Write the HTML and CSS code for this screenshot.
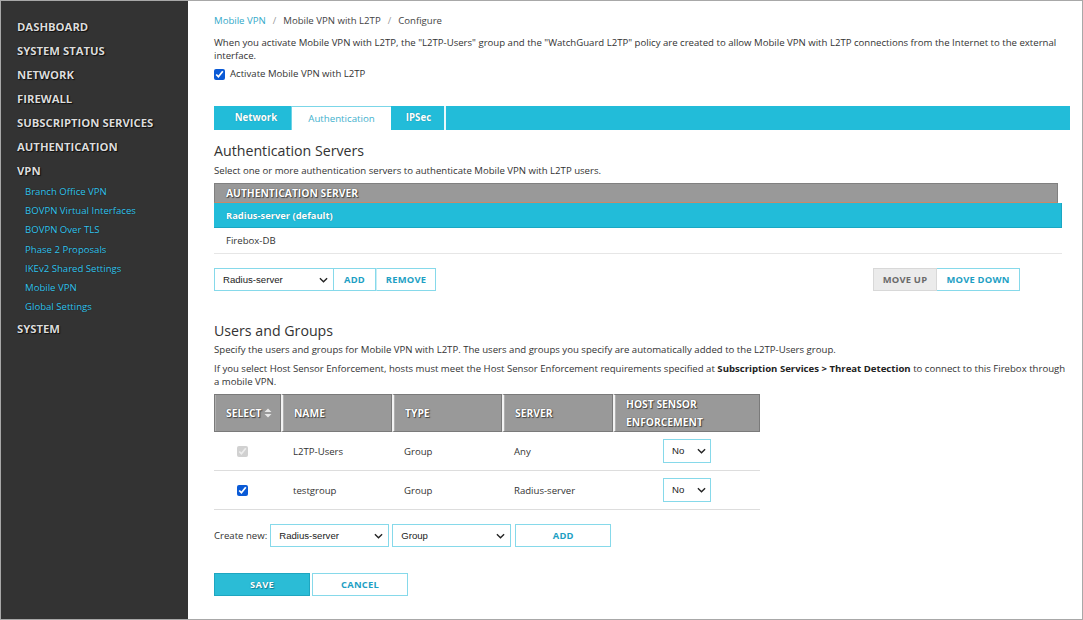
FILE: index.html
```html
<!DOCTYPE html>
<html>
<head>
<meta charset="utf-8">
<link rel="stylesheet" href="styles.css">
</head>
<body>
<div class="frame">
  <nav class="sidebar">
    <div class="nav-main">DASHBOARD</div>
    <div class="nav-main">SYSTEM STATUS</div>
    <div class="nav-main">NETWORK</div>
    <div class="nav-main">FIREWALL</div>
    <div class="nav-main">SUBSCRIPTION SERVICES</div>
    <div class="nav-main">AUTHENTICATION</div>
    <div class="nav-main">VPN</div>
    <div class="nav-sub">
      <div>Branch Office VPN</div>
      <div>BOVPN Virtual Interfaces</div>
      <div>BOVPN Over TLS</div>
      <div>Phase 2 Proposals</div>
      <div>IKEv2 Shared Settings</div>
      <div>Mobile VPN</div>
      <div>Global Settings</div>
    </div>
    <div class="nav-main">SYSTEM</div>
  </nav>
  <main class="main">
    <div class="crumbs"><span class="crumb-link">Mobile VPN</span><span class="sep">/</span>Mobile VPN with L2TP<span class="sep">/</span>Configure</div>
    <p class="intro">When you activate Mobile VPN with L2TP, the "L2TP-Users" group and the "WatchGuard L2TP" policy are created to allow Mobile VPN with L2TP connections from the Internet to the external interface.</p>
    <label class="check-line"><input type="checkbox" checked> Activate Mobile VPN with L2TP</label>

    <div class="tabs">
      <div class="tab tab-net">Network</div>
      <div class="tab tab-active">Authentication</div>
      <div class="tab tab-ipsec">IPSec</div>
      <div class="tab-rest"></div>
    </div>

    <h2 class="h2 h2-auth">Authentication Servers</h2>
    <p class="desc desc-auth">Select one or more authentication servers to authenticate Mobile VPN with L2TP users.</p>
    <div class="auth-table">
      <div class="auth-head">AUTHENTICATION SERVER</div>
      <div class="auth-row auth-sel">Radius-server (default)</div>
      <div class="auth-row">Firebox-DB</div>
    </div>

    <div class="controls">
      <div class="group">
        <div class="sel sel-radius">Radius-server<svg class="chev" viewBox="0 0 10 6" width="9" height="6"><path d="M1 1l4 4 4-4" fill="none" stroke="#222" stroke-width="1.5"/></svg></div>
        <button class="btn btn-add">ADD</button>
        <button class="btn btn-remove">REMOVE</button>
      </div>
      <div class="group">
        <button class="btn btn-gray btn-up">MOVE UP</button>
        <button class="btn btn-down">MOVE DOWN</button>
      </div>
    </div>

    <h2 class="h2 h2-users">Users and Groups</h2>
    <p class="desc desc-users">Specify the users and groups for Mobile VPN with L2TP. The users and groups you specify are automatically added to the L2TP-Users group.</p>
    <p class="desc desc-host">If you select Host Sensor Enforcement, hosts must meet the Host Sensor Enforcement requirements specified at <b>Subscription Services &gt; Threat Detection</b> to connect to this Firebox through a mobile VPN.</p>

    <table class="users">
      <thead>
        <tr>
          <th class="c-sel">SELECT<svg class="sort" viewBox="0 0 8 10" width="8" height="10"><path d="M4 0.5L7.5 4H0.5Z M4 9.5L7.5 6H0.5Z" fill="#e6e6e6"/></svg></th>
          <th class="c-name">NAME</th>
          <th class="c-type">TYPE</th>
          <th class="c-server">SERVER</th>
          <th class="c-host">HOST SENSOR<br>ENFORCEMENT</th>
        </tr>
      </thead>
      <tbody>
        <tr>
          <td class="c-sel"><input type="checkbox" checked disabled></td>
          <td>L2TP-Users</td>
          <td>Group</td>
          <td>Any</td>
          <td class="c-host"><div class="sel sel-no">No<svg class="chev" viewBox="0 0 10 6" width="9" height="6"><path d="M1 1l4 4 4-4" fill="none" stroke="#222" stroke-width="1.5"/></svg></div></td>
        </tr>
        <tr>
          <td class="c-sel"><input type="checkbox" checked></td>
          <td>testgroup</td>
          <td>Group</td>
          <td>Radius-server</td>
          <td class="c-host"><div class="sel sel-no">No<svg class="chev" viewBox="0 0 10 6" width="9" height="6"><path d="M1 1l4 4 4-4" fill="none" stroke="#222" stroke-width="1.5"/></svg></div></td>
        </tr>
      </tbody>
    </table>

    <div class="create">
      <span class="create-label">Create new:</span>
      <div class="sel sel-create">Radius-server<svg class="chev" viewBox="0 0 10 6" width="9" height="6"><path d="M1 1l4 4 4-4" fill="none" stroke="#222" stroke-width="1.5"/></svg></div>
      <div class="sel sel-create">Group<svg class="chev" viewBox="0 0 10 6" width="9" height="6"><path d="M1 1l4 4 4-4" fill="none" stroke="#222" stroke-width="1.5"/></svg></div>
      <button class="btn btn-create-add">ADD</button>
    </div>

    <div class="actions">
      <button class="btn btn-save">SAVE</button>
      <button class="btn btn-cancel">CANCEL</button>
    </div>
  </main>
</div>
</body>
</html>
```

FILE: styles.css
```css
* { box-sizing: border-box; }
html, body { margin: 0; padding: 0; background: #fff; }
body { font-family: "Open Sans", "Noto Sans", sans-serif; color: #333; }

.frame {
  width: 1083px;
  height: 620px;
  border: 1px solid #a8a8a8;
  display: flex;
  overflow: hidden;
}

.sidebar {
  width: 187px;
  flex: 0 0 187px;
  background: #333333;
  padding: 18px 0 0 16px;
}
.nav-main {
  font-size: 11.3px;
  font-weight: 700;
  color: #dcdcdc;
  line-height: 16px;
  height: 24px;
  text-shadow: 0 0 1px #000, 1px 1px 1px #111;
}
.nav-sub {
  margin-top: -8px;
  padding: 3px 0 2px 8px;
  margin-bottom: 3px;
}
.nav-sub div {
  font-size: 9.6px;
  line-height: 19.2px;
  color: #36c6ef;
  text-shadow: 0 0 1px #111;
}

.main {
  flex: 1;
  padding: 12px 13px 0 26px;
  min-width: 0;
}

.crumbs {
  font-size: 9.6px;
  line-height: 16px;
  color: #444;
}
.crumb-link { color: #32a9c9; }
.sep { color: #999; margin: 0 7px; }

.intro {
  margin: 7px 0 0;
  font-size: 9.6px;
  line-height: 13px;
  color: #333;
}
.check-line {
  display: flex;
  align-items: center;
  margin-top: 5px;
  font-size: 9.6px;
  line-height: 14px;
  color: #333;
}
.check-line input { margin: 0 5px 0 0; width: 11px; height: 11px; }

input[type=checkbox] { accent-color: #0a5ad6; }

.tabs {
  margin-top: 25px;
  height: 24px;
  display: flex;
  background: #22bcd9;
  width: 856px;
}
.tab {
  font-size: 9.7px;
  line-height: 24px;
  text-align: center;
}
.tab-net {
  width: 78px;
  padding-left: 7px;
  color: #fff;
  font-weight: 700;
  text-shadow: 0 0 1px #0a7d95;
  border-right: 1px solid #6dd3e6;
}
.tab-active {
  width: 99px;
  background: #fff;
  color: #3fb1cd;
  border-top: 1px solid #7bd6e8;
}
.tab-ipsec {
  width: 55px;
  padding-left: 2px;
  color: #fff;
  font-weight: 700;
  text-shadow: 0 0 1px #0a7d95;
  border-right: 2px solid #e9f8fb;
}
.tab-rest { flex: 1; }

.h2 {
  margin: 0;
  font-size: 14.2px;
  font-weight: 400;
  color: #333;
  line-height: 20px;
}
.h2-auth { margin-top: 11px; }
.desc {
  margin: 0;
  font-size: 9.6px;
  line-height: 13px;
  color: #333;
}
.desc-auth { margin-top: 3px; }
.auth-table { margin-top: 6px; }
.auth-head {
  width: 844px;
  height: 20px;
  background: #999999;
  border: 1px solid #808080;
  border-bottom: 1px solid #c78a6a;
  color: #fff;
  font-size: 10.3px;
  font-weight: 700;
  line-height: 18px;
  padding-left: 11px;
  text-shadow: 0 0 1px #333, 1px 1px 1px #444;
}
.auth-row {
  width: 848px;
  height: 26px;
  font-size: 9.6px;
  line-height: 25px;
  padding-left: 12px;
  border-bottom: 1px solid #e6e6e6;
  color: #333;
}
.auth-sel {
  height: 25px;
  background: #22bcd9;
  color: #fff;
  font-weight: 700;
  font-size: 9.4px;
  text-shadow: 0 0 1px #0a7d95;
  border-bottom: 1px solid #1aa7c3;
  border-right: 1px solid #1aa7c3;
}

.controls {
  margin-top: 14px;
  width: 806px;
  display: flex;
  justify-content: space-between;
}
.group { display: flex; }

.sel {
  position: relative;
  height: 23px;
  border: 1px solid #86d9ea;
  font-family: "Liberation Sans", Arial, sans-serif;
  font-size: 9.6px;
  line-height: 21px;
  color: #222;
  padding-left: 8px;
  background: #fff;
}
.chev { position: absolute; right: 5px; top: 8px; }
.sel-radius { width: 120px; }

.btn {
  height: 23px;
  margin: 0;
  background: #fff;
  border: 1px solid #86d9ea;
  font-family: "Open Sans", "Noto Sans", sans-serif;
  font-size: 9.4px;
  font-weight: 700;
  color: #1e9fc4;
  padding: 0;
  letter-spacing: 0.2px;
}
.btn-add { width: 42px; border-left: 0; }
.btn-remove { width: 60px; border-left: 1px solid #c9edf5; }
.btn-gray {
  background: #ebebeb;
  border-color: #d8d8d8;
  color: #6a6a6a;
}
.btn-up { width: 64px; }
.btn-down { width: 83px; border-left: 0; }

.h2-users { margin-top: 30px; }
.desc-users { margin-top: 1.5px; }
.desc-host { margin-top: 6px; }
.desc-host b { color: #222; }

.users {
  margin-top: 6.5px;
  border-collapse: separate;
  border-spacing: 0;
  width: 546px;
}
.users th {
  background: #999999;
  border: 1px solid #7a7a7a;
  box-shadow: inset 1px 0 0 #b0b0b0;
  height: 36px;
  text-align: left;
  color: #fff;
  font-weight: 700;
  font-size: 10.3px;
  line-height: 18px;
  padding: 0 0 0 11px;
  text-shadow: 0 0 1px #333, 1px 1px 1px #444;
  vertical-align: middle;
}
.users th + th { border-left: 2px solid #f2f2f2; }
.users th.c-sel { width: 67px; }
.users th.c-name { width: 111px; }
.users th.c-type { width: 110px; }
.users th.c-server { width: 111px; }
.users th.c-host { width: 147px; }
.sort { margin-left: 2px; vertical-align: -1px; }

.users td {
  height: 39px;
  border-bottom: 1px solid #dddddd;
  font-size: 9.6px;
  color: #333;
  padding: 0 0 0 12px;
  vertical-align: middle;
}
.users td.c-sel { padding-left: 23px; }
.users td.c-sel input { margin: 0; width: 11px; height: 11px; display: block; }
.users td.c-host { padding-left: 50px; }
.sel-no { width: 48px; height: 24px; line-height: 21px; font-size: 9.6px; }
.sel-no .chev { top: 8px; right: 4px; }

.create {
  margin-top: 14px;
  display: flex;
  align-items: center;
  gap: 3px;
}
.create-label { font-size: 9.6px; color: #333; white-space: nowrap; }
.sel-create { width: 119px; }
.btn-create-add { width: 96px; margin-left: 1px; }

.actions {
  margin-top: 26px;
  display: flex;
  gap: 2px;
}
.btn-save {
  width: 96px;
  background: #2bbcd6;
  border-color: #1ea6c0;
  color: #fff;
  text-shadow: 0 0 1px #0a7d95, 1px 1px 1px #0a7d95;
}
.btn-cancel { width: 96px; }
```
